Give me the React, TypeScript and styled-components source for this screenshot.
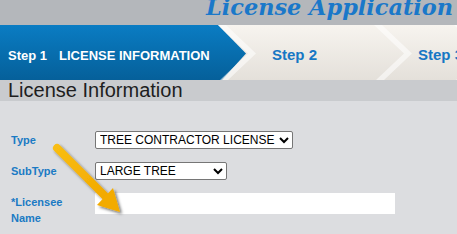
import React from "react";
import styled, { createGlobalStyle } from "styled-components";

const Global = createGlobalStyle`
  html, body { margin: 0; padding: 0; }
  body { font-family: "Liberation Sans", Arial, sans-serif; background: #dcdde0; }
`;

const Page = styled.div`
  width: 457px;
  height: 234px;
  overflow: hidden;
  position: relative;
  background: linear-gradient(#d3d4d7, #dcdde0 40%, #dcdde0);
`;

const TitleBar = styled.div`
  height: 25px;
  background: #b4b7bb;
  overflow: hidden;
  display: flex;
  justify-content: flex-end;
  align-items: flex-end;
  padding-right: 4px;
`;

const Title = styled.div`
  font-family: "DejaVu Serif", "Liberation Serif", serif;
  font-style: italic;
  font-weight: bold;
  font-size: 22.4px;
  line-height: 22px;
  color: #1a78c9;
  white-space: nowrap;
  margin-bottom: 7px;
`;

const StepBar = styled.div`
  height: 55px;
  display: flex;
  background: linear-gradient(#f7f4ef, #e4e0da);
  overflow: hidden;
`;

const StepItem = styled.div<{ $active?: boolean; $width: number; $pad: number }>`
  position: relative;
  flex: 0 0 ${(p) => p.$width}px;
  display: flex;
  align-items: center;
  padding-left: ${(p) => p.$pad}px;
  box-sizing: border-box;
  white-space: nowrap;
  font-weight: bold;
  color: ${(p) => (p.$active ? "#ffffff" : "#1677c4")};
  font-size: ${(p) => (p.$active ? "13px" : "15px")};
  padding-top: ${(p) => (p.$active ? "5px" : "3px")};
  &::before {
    content: "";
    position: absolute;
    inset: 0;
    z-index: 0;
    background: ${(p) =>
      p.$active ? "linear-gradient(#0a7cc3, #05609a)" : "transparent"};
    clip-path: polygon(0 0, calc(100% - 28px) 0, 100% 52%, calc(100% - 24px) 100%, 0 100%);
  }
  &::after {
    content: "";
    position: absolute;
    top: 0;
    bottom: 0;
    right: -12px;
    width: 40px;
    z-index: 0;
    background: rgba(255, 255, 255, 0.55);
    clip-path: polygon(0 0, 8px 0, 38px 52%, 10px 100%, 2px 100%, 30px 52%);
  }
  & > span {
    position: relative;
    z-index: 1;
  }
`;

const StepGap = styled.span`
  display: inline-block;
  width: 12px;
`;

const Heading = styled.h2`
  margin: 0;
  height: 21px;
  line-height: 21px;
  padding-left: 8px;
  font-weight: normal;
  font-size: 20px;
  color: #1e1e1e;
  background: #c9cbce;
`;

const Form = styled.div`
  padding: 30px 0 0 11px;
  display: grid;
  grid-template-columns: 84px auto;
  row-gap: 13px;
  align-items: start;
  justify-content: start;
`;

const Label = styled.div`
  font-size: 11px;
  font-weight: bold;
  line-height: 16px;
  padding-top: 1px;
  color: #1a7ac4;
`;

const Select = styled.select<{ $width: number }>`
  width: ${(p) => p.$width}px;
  height: 18px;
  margin: 0;
  padding: 0;
  font-family: "Liberation Sans", Arial, sans-serif;
  font-size: 12px;
  color: #000;
  background: #fff;
  border: 1px solid #767676;
  border-radius: 2px;
`;

const TextInput = styled.input`
  width: 300px;
  height: 21px;
  box-sizing: border-box;
  margin: 0;
  border: none;
  background: #fff;
  outline: none;
`;

const Arrow = styled.svg`
  position: absolute;
  left: 40px;
  top: 138px;
  pointer-events: none;
`;

export default function App() {
  return (
    <Page>
      <Global />
      <TitleBar>
        <Title>License Application</Title>
      </TitleBar>
      <StepBar>
        <StepItem $active $width={246} $pad={8}>
          <span>
            Step 1<StepGap />LICENSE INFORMATION
          </span>
        </StepItem>
        <StepItem $width={156} $pad={26}>
          <span>Step 2</span>
        </StepItem>
        <StepItem $width={80} $pad={16}>
          <span>Step 3</span>
        </StepItem>
      </StepBar>
      <Heading>License Information</Heading>
      <Form>
        <Label>Type</Label>
        <Select $width={198} defaultValue="tc">
          <option value="tc">TREE CONTRACTOR LICENSE</option>
        </Select>
        <Label>SubType</Label>
        <Select $width={132} defaultValue="lt">
          <option value="lt">LARGE TREE</option>
        </Select>
        <Label>
          *Licensee
          <br />
          Name
        </Label>
        <TextInput type="text" />
      </Form>
      <Arrow width="100" height="90" viewBox="0 0 100 90">
        <defs>
          <filter id="sh" x="-30%" y="-30%" width="160%" height="160%">
            <feDropShadow dx="2" dy="2" stdDeviation="1.6" floodColor="#000" floodOpacity="0.55" />
          </filter>
          <linearGradient id="ag" x1="0" y1="0" x2="1" y2="1">
            <stop offset="0" stopColor="#f9bd12" />
            <stop offset="1" stopColor="#f2a900" />
          </linearGradient>
        </defs>
        <g filter="url(#sh)">
          <line x1="17" y1="10" x2="66" y2="59" stroke="url(#ag)" strokeWidth="8" strokeLinecap="round" />
          <polygon points="80,74 57,67 73,50" fill="#f3ab00" />
        </g>
      </Arrow>
    </Page>
  );
}
